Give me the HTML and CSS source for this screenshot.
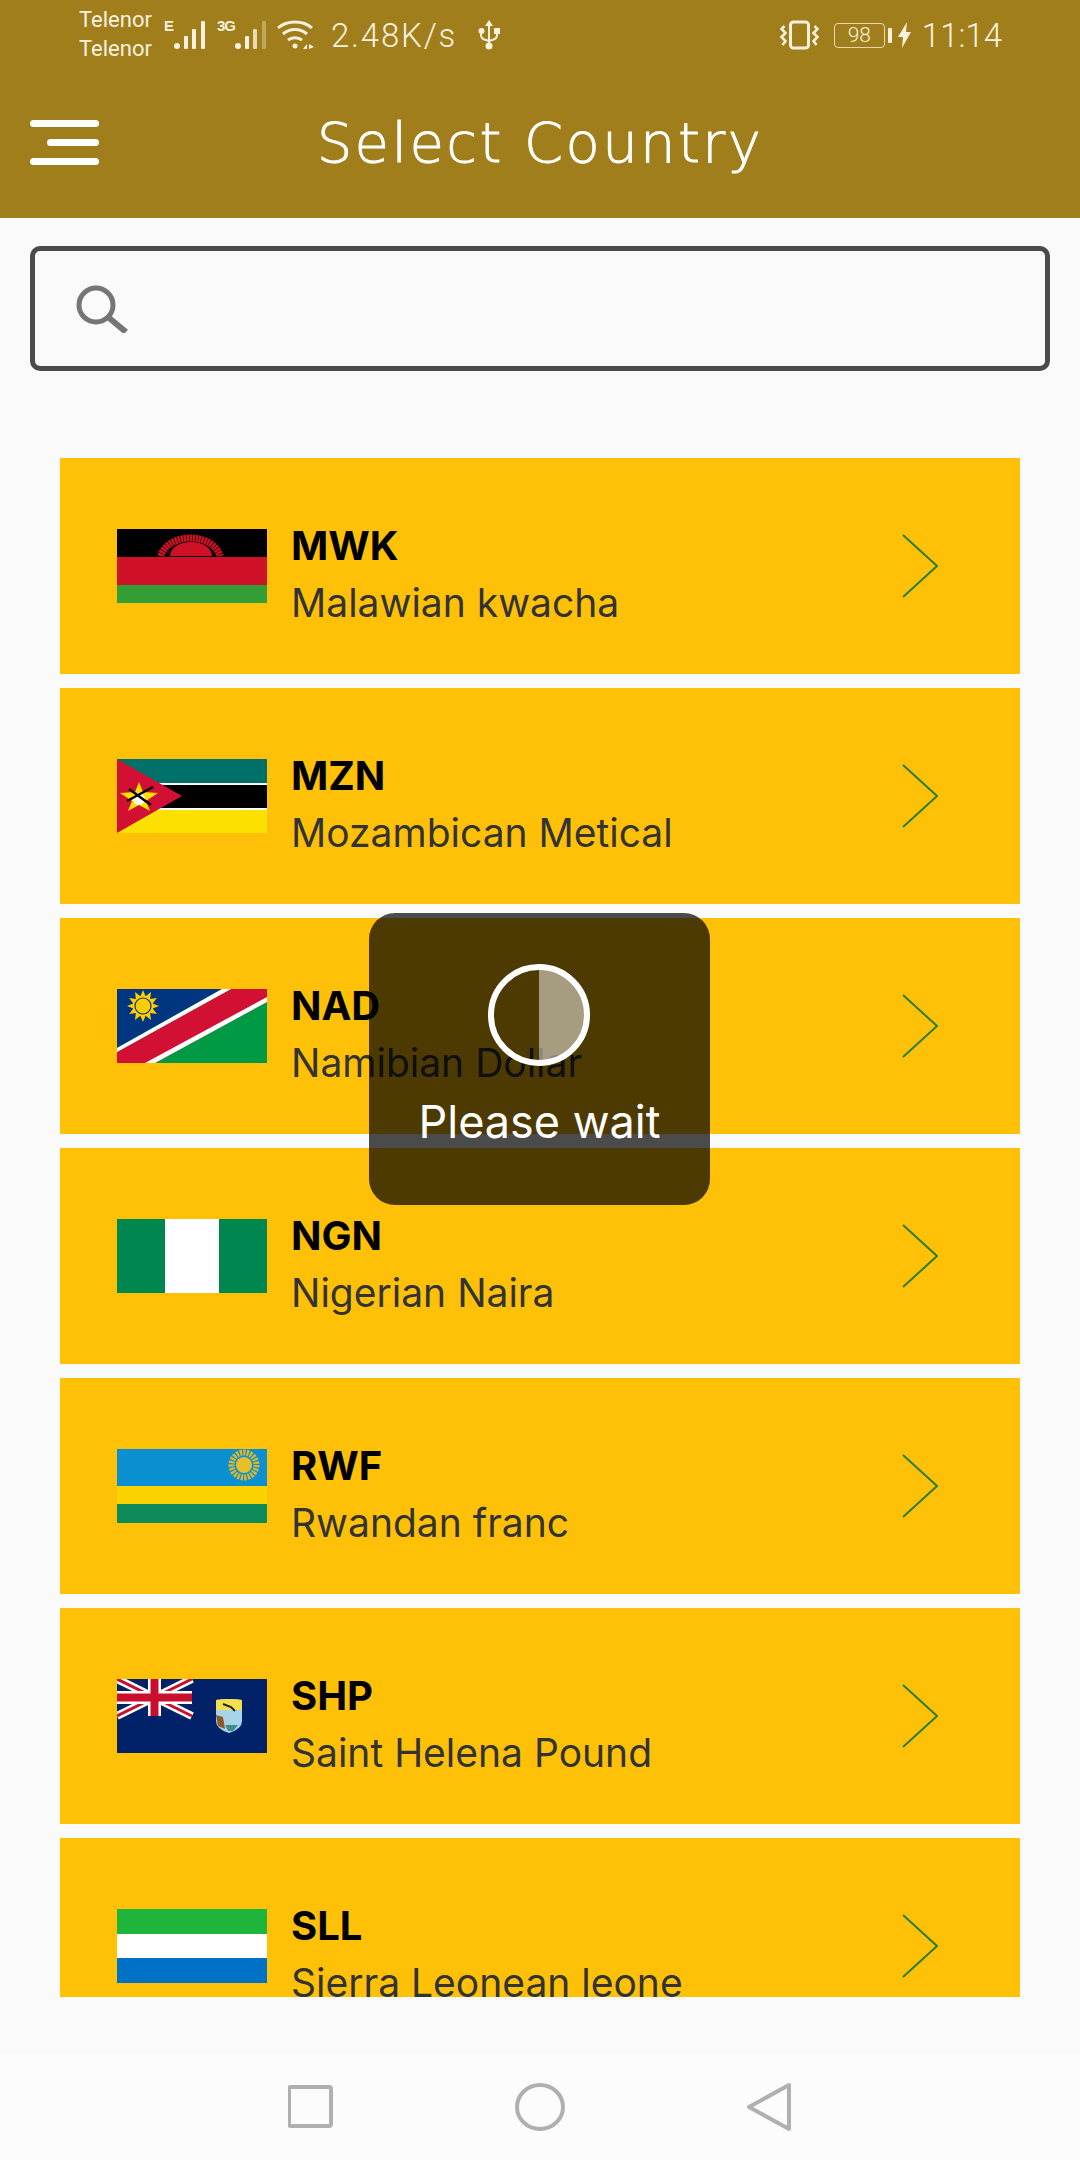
FILE: index.html
```html
<!DOCTYPE html>
<html lang="en">

<head>
  <meta charset="UTF-8">
  <meta name="viewport" content="width=device-width, initial-scale=1.0">
  <title>Select Country</title>
  <link rel="stylesheet" href="styles.css">
</head>

<body>
  <div class="screen">
    <header class="appbar">
      <div class="status">
        <div class="carriers">
          <span>Telenor</span>
          <span>Telenor</span>
        </div>
        <span class="net net-e">E</span>
        <svg class="bars" width="33" height="30" viewBox="0 0 33 30" fill="#f7f1de">
          <circle cx="3" cy="26" r="3" />
          <rect x="10" y="16" width="4" height="13" rx="1" />
          <rect x="18" y="9" width="4" height="20" rx="1" />
          <rect x="27" y="1" width="4" height="28" rx="1" />
        </svg>
        <span class="net net-3g">3G</span>
        <svg class="bars bars-weak" width="33" height="30" viewBox="0 0 33 30" fill="#f7f1de">
          <circle cx="3" cy="26" r="3" />
          <rect x="10" y="16" width="4" height="13" rx="1" />
          <rect x="18" y="9" width="4" height="20" rx="1" opacity="0.8" />
          <rect x="27" y="1" width="4" height="28" rx="1" opacity="0.35" />
        </svg>
        <svg class="wifi" width="38" height="30" viewBox="0 0 38 30" fill="none" stroke="#f7f1de" stroke-width="3">
          <path d="M1 8 C10 0 26 0 35 8" />
          <path d="M6 14 C13 8 23 8 30 14" />
          <path d="M11 20 C15 17 21 17 25 20" />
          <circle cx="18" cy="26" r="2.5" fill="#f7f1de" stroke="none" />
          <path d="M26 29 L30 24 V29 Z M32 24 L37 27 L32 29 Z" fill="#f7f1de" stroke="none" />
        </svg>
        <span class="speed">2.48K/s</span>
        <svg class="usb" width="22" height="30" viewBox="0 0 22 30" fill="#f7f1de">
          <path d="M11 0 L15 6 H12 V26 H10 V6 H7 Z" />
          <circle cx="11" cy="26" r="3.5" />
          <circle cx="3.5" cy="11" r="3" />
          <rect x="16" y="8" width="6" height="6" />
          <path d="M3 12 V15 Q3 19 8 20 L11 21 L14 20 Q19 19 19 15 V12" fill="none" stroke="#f7f1de" stroke-width="2" />
        </svg>
        <div class="status-right">
          <svg class="vibrate" width="41" height="30" viewBox="0 0 40 30" fill="none" stroke="#f7f1de">
            <rect x="11" y="2" width="18" height="26" rx="3" stroke-width="3" />
            <path d="M5 6 L2 9 L6 13 L2 17 L6 21 L3 25" stroke-width="2.5" />
            <path d="M35 6 L38 9 L34 13 L38 17 L34 21 L37 25" stroke-width="2.5" />
          </svg>
          <div class="battery">98</div>
          <span class="battery-nub"></span>
          <svg class="bolt" width="13" height="26" viewBox="0 0 13 26" fill="#f7f1de">
            <path d="M9 0 L0 15 H5 L4 26 L13 10 H8 Z" />
          </svg>
          <span class="clock">11:14</span>
        </div>
      </div>

      <div class="toolbar">
        <svg class="menu" width="69" height="46" viewBox="0 0 69 46" fill="#fff">
          <rect x="0" y="0" width="69" height="7" rx="3.5" />
          <rect x="17" y="19" width="52" height="7" rx="3.5" />
          <rect x="0" y="38" width="69" height="7" rx="3.5" />
        </svg>
        <h1>Select Country</h1>
      </div>
    </header>

    <div class="search">
      <svg width="54" height="48" viewBox="0 0 54 48" fill="none" stroke="#757575">
        <circle cx="21" cy="20" r="17" stroke-width="5" />
        <path d="M33 32 L51 47" stroke-width="6" />
      </svg>
      <input type="text" aria-label="Search">
    </div>

    <main class="list">
      <div class="row">
        <svg class="flag" viewBox="0 0 150 74">
          <rect width="150" height="28" fill="#000" />
          <rect y="28" width="150" height="28" fill="#ce1126" />
          <rect y="56" width="150" height="18" fill="#339e35" />
          <path d="M44 27 A30 22 0 0 1 103 27" fill="none" stroke="#ce1126" stroke-width="7" stroke-dasharray="2.4 0.6" />
          <path d="M53 27 A21 14 0 0 1 95 27 Z" fill="#ce1126" />
        </svg>
        <div class="info">
          <div class="code">MWK</div>
          <div class="name">Malawian kwacha</div>
        </div>
        <svg class="chevron" viewBox="0 0 36 64">
          <path d="M1 1 L35 32 L1 63" />
        </svg>
      </div>

      <div class="row">
        <svg class="flag" viewBox="0 0 150 74">
          <rect width="150" height="24" fill="#007168" />
          <rect y="24" width="150" height="27" fill="#fff" />
          <rect y="26" width="150" height="23" fill="#000" />
          <rect y="51" width="150" height="23" fill="#fce100" />
          <path d="M0 0 L65 37 L0 74 Z" fill="#d21034" />
          <path d="M22 23 L26 33 L41 34 L29 42 L33 52 L22 46 L11 52 L15 42 L3 34 L18 33 Z" fill="#fce100" />
          <circle cx="22" cy="40" r="6" fill="#fff" />
          <path d="M10 42 L36 28 M12 30 L34 46" stroke="#000" stroke-width="2.5" />
        </svg>
        <div class="info">
          <div class="code">MZN</div>
          <div class="name">Mozambican Metical</div>
        </div>
        <svg class="chevron" viewBox="0 0 36 64">
          <path d="M1 1 L35 32 L1 63" />
        </svg>
      </div>

      <div class="row">
        <svg class="flag" viewBox="0 0 150 74">
          <rect width="150" height="74" fill="#009a44" />
          <path d="M0 0 H105 L0 59 Z" fill="#003580" />
          <path d="M114 0 H150 V13 L38 74 H0 V63 Z" fill="#d21034" />
          <path d="M105 0 H114 L0 63 V59 Z M150 8 V13 L38 74 H28 Z" fill="#fff" />
          <path fill="#ffce00" d="M42 17 L35.7 19.6 L39.9 25 L33.1 24.1 L34 30.9 L28.6 26.7 L26 33 L23.4 26.7 L18 30.9 L18.9 24.1 L12.1 25 L16.3 19.6 L10 17 L16.3 14.4 L12.1 9 L18.9 9.9 L18 3.1 L23.4 7.3 L26 1 L28.6 7.3 L34 3.1 L33.1 9.9 L39.9 9 L35.7 14.4 Z" />
          <circle cx="26" cy="17" r="8" fill="#ffce00" stroke="#003580" stroke-width="1.2" />
        </svg>
        <div class="info">
          <div class="code">NAD</div>
          <div class="name">Namibian Dollar</div>
        </div>
        <svg class="chevron" viewBox="0 0 36 64">
          <path d="M1 1 L35 32 L1 63" />
        </svg>
      </div>

      <div class="row">
        <svg class="flag" viewBox="0 0 150 74">
          <rect width="150" height="74" fill="#008751" />
          <rect x="48" width="54" height="74" fill="#fff" />
        </svg>
        <div class="info">
          <div class="code">NGN</div>
          <div class="name">Nigerian Naira</div>
        </div>
        <svg class="chevron" viewBox="0 0 36 64">
          <path d="M1 1 L35 32 L1 63" />
        </svg>
      </div>

      <div class="row">
        <svg class="flag" viewBox="0 0 150 74">
          <rect width="150" height="37" fill="#0a8fd0" />
          <rect y="37" width="150" height="18" fill="#fad201" />
          <rect y="55" width="150" height="19" fill="#0f8a5a" />
          <circle cx="127" cy="16" r="12.5" fill="none" stroke="#e0b92a" stroke-width="6" stroke-dasharray="2.2 1.2" />
          <circle cx="127" cy="16" r="8" fill="#e5be2a" />
        </svg>
        <div class="info">
          <div class="code">RWF</div>
          <div class="name">Rwandan franc</div>
        </div>
        <svg class="chevron" viewBox="0 0 36 64">
          <path d="M1 1 L35 32 L1 63" />
        </svg>
      </div>

      <div class="row">
        <svg class="flag" viewBox="0 0 150 74">
          <rect width="150" height="74" fill="#012169" />
          <path d="M0 0 L75 37 M75 0 L0 37" stroke="#fff" stroke-width="8" />
          <path d="M0 0 L75 37 M75 0 L0 37" stroke="#c8102e" stroke-width="3" />
          <path d="M37.5 0 V37 M0 18.5 H75" stroke="#fff" stroke-width="13" />
          <path d="M37.5 0 V37 M0 18.5 H75" stroke="#c8102e" stroke-width="8" />
          <path d="M99 21 Q112 19 125 21 V42 Q125 50 112 54 Q99 50 99 42 Z" fill="#a8d4e8" />
          <path d="M99 21 Q112 19 125 21 V31 H99 Z" fill="#f4e04d" />
          <path d="M99 36 L106 38 L108 50 L101 47 Z" fill="#8a5a2a" />
          <path d="M108 46 H121 L116 52 H111 Z" fill="#3d8f8f" />
          <path d="M106 25 L114 28 L118 32" stroke="#222" stroke-width="2" fill="none" />
        </svg>
        <div class="info">
          <div class="code">SHP</div>
          <div class="name">Saint Helena Pound</div>
        </div>
        <svg class="chevron" viewBox="0 0 36 64">
          <path d="M1 1 L35 32 L1 63" />
        </svg>
      </div>

      <div class="row">
        <svg class="flag" viewBox="0 0 150 74">
          <rect width="150" height="25" fill="#1eb53a" />
          <rect y="25" width="150" height="24" fill="#fff" />
          <rect y="49" width="150" height="25" fill="#0072c6" />
        </svg>
        <div class="info">
          <div class="code">SLL</div>
          <div class="name">Sierra Leonean leone</div>
        </div>
        <svg class="chevron" viewBox="0 0 36 64">
          <path d="M1 1 L35 32 L1 63" />
        </svg>
      </div>
    </main>

    <nav class="navbar">
      <svg width="46" height="44" viewBox="1 0 46 44">
        <rect x="2" y="2" width="42" height="39" rx="2" />
      </svg>
      <svg width="52" height="50" viewBox="0 0 52 50">
        <ellipse cx="26" cy="25" rx="23" ry="22" />
      </svg>
      <svg width="46" height="50" viewBox="0 0 46 50">
        <path d="M43 3 V47 L3 25 Z" />
      </svg>
    </nav>

    <!-- loading toast sits over the list -->
    <div class="toast">
      <svg class="spinner" width="104" height="104" viewBox="0 0 104 104">
        <path d="M52 3 A49 49 0 0 1 52 101 Z" fill="#fff" fill-opacity="0.5" />
        <circle cx="52" cy="52" r="48" fill="none" stroke="#fff" stroke-width="6" />
      </svg>
      <div class="toast-text">Please wait</div>
    </div>
  </div>
</body>

</html>
```

FILE: styles.css
```css
* {
  box-sizing: border-box;
}

body {
  margin: 0;
  background-color: #fafafa;
  font-family: Roboto, sans-serif;
}

.screen {
  position: relative;
  width: 1080px;
  height: 2160px;
  overflow: hidden;
  display: flex;
  flex-direction: column;
}

.appbar {
  height: 218px;
  background-color: #a07e1c;
  color: #fff;
}

/* status bar */
.status {
  height: 70px;
  padding: 0 78px 0 79px;
  display: flex;
  align-items: center;
  color: #f7f1de;
}

.carriers {
  display: flex;
  flex-direction: column;
  width: 85px;
  font-size: 22px;
  line-height: 29px;
  margin-top: -3px;
}

.net {
  font-size: 15px;
  font-weight: 700;
  font-family: "Liberation Sans", sans-serif;
  align-self: flex-start;
  margin-top: 17px;
}

.net-e {
  width: 10px;
}

.net-3g {
  width: 18px;
  margin-left: 10px;
  letter-spacing: -1px;
}

.wifi {
  margin-left: 9px;
}

.speed {
  margin-left: 16px;
  font-size: 33px;
  font-weight: 300;
  letter-spacing: 1.8px;
}

.usb {
  margin-left: 21px;
}

.status-right {
  margin-left: auto;
  display: flex;
  align-items: center;
}

.battery {
  margin-left: 14px;
  width: 51px;
  height: 25px;
  border: 1.5px solid #e8d9a8;
  border-radius: 4px;
  font-size: 21px;
  line-height: 22px;
  font-weight: 300;
  text-align: center;
}

.battery-nub {
  width: 4px;
  height: 15px;
  margin-left: 3px;
  background-color: #f7f1de;
  border-radius: 1px;
}

.bolt {
  margin-left: 6px;
}

.clock {
  margin-left: 11px;
  font-size: 33px;
  font-weight: 300;
}

/* title row */
.toolbar {
  height: 148px;
  padding: 0 30px;
  display: grid;
  grid-template-columns: 1fr auto 1fr;
  align-items: center;
}

.menu {
  margin-top: -2px;
}

.toolbar h1 {
  margin: -3px 0 0;
  font-family: "DejaVu Sans", sans-serif;
  font-size: 56px;
  font-weight: 200;
  letter-spacing: 2.4px;
  -webkit-text-stroke: 0.8px #fff;
  white-space: nowrap;
}

/* search */
.search {
  margin: 28px 30px 0;
  height: 125px;
  padding-left: 40px;
  border: 5px solid #4a4a4a;
  border-radius: 10px;
  display: flex;
  align-items: center;
  gap: 16px;
}

.search input {
  flex: 1;
  border: 0;
  outline: 0;
  background: transparent;
  font-size: 36px;
}

/* list */
.list {
  margin: 86.5px 60px 0;
  height: 1539.5px;
  overflow: hidden;
  display: flex;
  flex-direction: column;
  gap: 14px;
}

.row {
  flex: none;
  height: 216px;
  padding: 0 82px 0 57px;
  background-color: #ffc107;
  display: flex;
  align-items: center;
}

.flag {
  flex: none;
  width: 150px;
  height: 74px;
  display: block;
}

.info {
  flex: 1;
  margin-left: 24px;
  padding-top: 16px;
  font-family: Inter, sans-serif;
}

.code {
  font-size: 40px;
  line-height: 48px;
  font-weight: 700;
  color: #000;
}

.name {
  margin-top: 11px;
  font-size: 39px;
  line-height: 44px;
  color: #333;
}

.chevron {
  flex: none;
  width: 36px;
  height: 64px;
  fill: none;
  stroke: #2e7d32;
  stroke-width: 2;
}

/* bottom nav */
.navbar {
  margin-top: 56px;
  flex: 1;
  background-color: #fcfcfc;
  padding: 0 288px;
  display: flex;
  align-items: center;
  justify-content: space-between;
}

.navbar svg {
  fill: none;
  stroke: #b0b0b0;
  stroke-width: 4;
  stroke-linejoin: round;
}

/* toast */
.toast {
  position: absolute;
  left: 369px;
  top: 913px;
  width: 341px;
  height: 292px;
  padding-top: 50px;
  border-radius: 26px;
  background-color: rgba(0, 0, 0, 0.7);
  display: flex;
  flex-direction: column;
  align-items: center;
}

.spinner {
  margin-left: -2px;
}

.toast-text {
  margin-top: 27px;
  font-family: Inter, sans-serif;
  font-size: 45px;
  line-height: 56px;
  color: #fff;
}
```
